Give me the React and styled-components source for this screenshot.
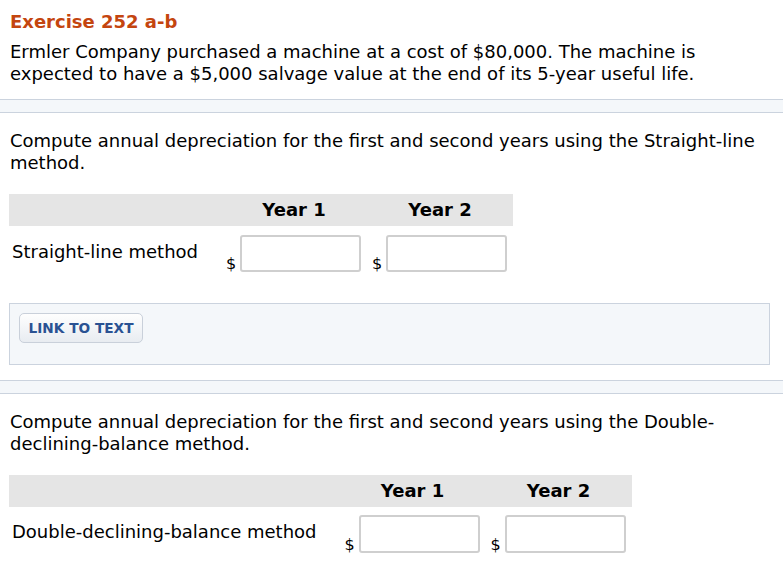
import React from 'react'
import styled, { createGlobalStyle } from 'styled-components'

const GlobalStyle = createGlobalStyle`
  body {
    margin: 0;
    background: #fff;
    font-family: Verdana, "DejaVu Sans", sans-serif;
    color: #000;
  }
`

const Page = styled.div`
  width: 783px;
  padding-top: 11px;
`

const Title = styled.h2`
  margin: 0 0 8px;
  padding: 0 10px;
  font-size: 18px;
  line-height: 22px;
  font-weight: bold;
  color: #c4450f;
`

const Text = styled.p`
  margin: 0;
  padding: 0 10px;
  font-size: 18px;
  line-height: 22px;
`

const Divider = styled.div`
  height: 12px;
  margin: ${p => p.$top}px 0 17px;
  background: #f4f7fa;
  border-top: 1px solid #cbd3de;
  border-bottom: 1px solid #cbd3de;
`

const Section = styled.div`
  padding: 0 13px 0 9px;
`

const Question = styled(Text)`
  padding: 0 1px;
`

const Grid = styled.div`
  display: grid;
  grid-template-columns: auto 146px 146px;
  width: max-content;
  margin-top: 20px;
`

const HeadCell = styled.div`
  height: 32px;
  padding-top: 5px;
  box-sizing: border-box;
  background: #e5e5e5;
  font-size: 18px;
  line-height: 22px;
  font-weight: bold;
  text-align: center;
`

const Label = styled.div`
  padding: 15px 23px 0 3px;
  font-size: 18px;
  line-height: 22px;
`

const ValueCell = styled.div`
  display: flex;
  align-items: flex-end;
  padding: ${p => p.$top}px 0 0 5px;
`

const Dollar = styled.span`
  width: 14px;
  font-size: 16px;
  line-height: 14px;
  padding-bottom: 1px;
`

const Field = styled.input`
  width: 121px;
  height: ${p => p.$h}px;
  box-sizing: border-box;
  margin: 0;
  border: 2px solid #cfcfcf;
  border-radius: 3px;
  background: #fff;
  font: inherit;
  outline: none;
`

const Panel = styled.div`
  margin-top: 31px;
  padding: 9px 9px 21px;
  background: #f4f7fa;
  border: 1px solid #cbd3de;
`

const LinkButton = styled.button`
  display: block;
  width: 124px;
  height: 30px;
  padding: 0;
  border: 1px solid #c9d0da;
  border-radius: 5px;
  background: linear-gradient(#fefefe, #e8ecf1);
  color: #2a5293;
  font-family: Verdana, "DejaVu Sans", sans-serif;
  font-size: 13.7px;
  font-weight: bold;
  cursor: pointer;
`

function AnswerTable({ label, top, h }) {
  return (
    <Grid>
      <HeadCell />
      <HeadCell>Year 1</HeadCell>
      <HeadCell>Year 2</HeadCell>
      <Label style={{ paddingTop: top + 6 }}>{label}</Label>
      {[1, 2].map(n => (
        <ValueCell key={n} $top={top}>
          <Dollar>$</Dollar>
          <Field type="text" $h={h} />
        </ValueCell>
      ))}
    </Grid>
  )
}

export default function App() {
  return (
    <Page>
      <GlobalStyle />
      <Title>Exercise 252 a-b</Title>
      <Text>
        Ermler Company purchased a machine at a cost of $80,000. The machine is
        expected to have a $5,000 salvage value at the end of its 5-year useful life.
      </Text>

      <Divider $top={14} />
      <Section>
        <Question>
          Compute annual depreciation for the first and second years using the Straight-line
          method.
        </Question>
        <AnswerTable label="Straight-line method" top={9} h={37} />
        <Panel>
          <LinkButton>LINK TO TEXT</LinkButton>
        </Panel>
      </Section>

      <Divider $top={15} />
      <Section>
        <Question>
          Compute annual depreciation for the first and second years using the Double-
          declining-balance method.
        </Question>
        <AnswerTable label="Double-declining-balance method" top={8} h={38} />
      </Section>
    </Page>
  )
}
